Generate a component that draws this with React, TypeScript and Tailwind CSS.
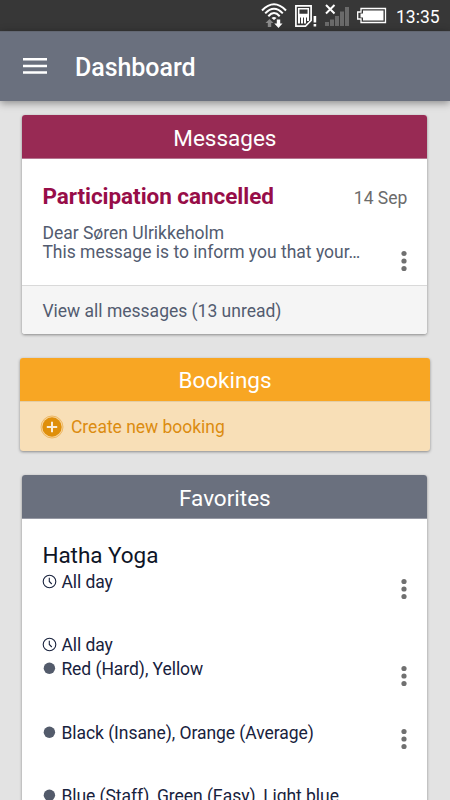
import React from 'react';

const WifiIcon = () => (
  <svg className="w-7 h-[31px]" viewBox="260 0 28 31" fill="none">
    <path d="M262 10.5Q274 -2 286 10.5" stroke="white" strokeWidth="2" />
    <path d="M265.2 13.4Q274 4 282.8 13.4" stroke="white" strokeWidth="2" />
    <path d="M268.3 16.2Q274 10 279.7 16.2" stroke="white" strokeWidth="2" />
    <path d="M271.5 18Q274 15.8 276.5 18L274 20Z" fill="white" />
    <path d="M269.5 19L273.5 23H271.2V27H267.8V23H265.5Z" fill="#8a8a8a" />
    <path d="M278.5 28L274.3 23.5H276.8V19.5H280.2V23.5H282.5Z" fill="white" />
  </svg>
);

const SimIcon = () => (
  <svg className="w-6 h-[31px]" viewBox="294 0 24 31" fill="none">
    <path d="M295.9 5.9H311.1V20.5L305.5 26.1H295.9Z" stroke="white" strokeWidth="1.7" />
    <path d="M298.7 8.7H308.3V14.5H298.7Z" stroke="white" strokeWidth="1.5" />
    <path d="M298 15H309V17.500H298ZM298 17H300V23.5H298ZM301 17H303V23.5H301ZM304 17H306V23.5H304ZM307 17H309V21H307Z" fill="white" />
    <path d="M313.6 16H316.2V22.5H313.6ZM313.6 24H316.2V26.6H313.6Z" fill="white" />
  </svg>
);

const SignalIcon = () => (
  <svg className="w-[26px] h-[31px]" viewBox="324 0 26 31">
    <path d="M325 22h4v4h-4zM330 19.5h4v6.5h-4zM335 16h4v10h-4zM340 11.5h4v14.5h-4zM345 7h4v19h-4z" fill="#6a6a6a" />
    <path d="M326 5L334.5 13.5M334.5 5L326 13.5" stroke="white" strokeWidth="2" />
  </svg>
);

const BatteryIcon = () => (
  <svg className="w-[30px] h-[31px]" viewBox="357 0 30 31">
    <path d="M361 8.5H385.5V22.5H361V19H357.7V12H361Z" fill="none" stroke="white" strokeWidth="1.3" />
    <path d="M363 10.5H383.5V20.5H363V17.5H360.5V13.5H363Z" fill="white" />
  </svg>
);

const ClockIcon = () => (
  <svg className="w-[15px] h-[15px]" viewBox="0 0 15 15" fill="none" stroke="#18223d">
    <circle cx="7.5" cy="7.5" r="6.3" strokeWidth="1.1" />
    <path d="M7.3 3.7V7.5L9.8 10" strokeWidth="1.1" />
  </svg>
);

const DotIcon = () => (
  <svg className="w-[15px] h-[15px]" viewBox="0 0 15 15" fill="#535b6b">
    <circle cx="7.4" cy="7.3" r="5.7" />
  </svg>
);

const PlusIcon = () => (
  <svg className="w-6 h-6" viewBox="0 0 24 24" fill="none">
    <circle cx="12" cy="12" r="11" fill="#f8d59f" stroke="#edb864" strokeWidth="1" />
    <circle cx="12" cy="12" r="9.7" fill="#df8f0b" />
    <path d="M12 6.8V17.2M6.8 12H17.2" stroke="#faedda" strokeWidth="2" />
  </svg>
);

const MoreButton = () => (
  <button className="w-[6px] h-[22px] block" aria-label="More options">
    <svg className="w-[6px] h-[22px] block" viewBox="0 0 6 22" fill="#707070">
      <circle cx="3" cy="3.5" r="2.6" />
      <circle cx="3" cy="11" r="2.6" />
      <circle cx="3" cy="18.5" r="2.6" />
    </svg>
  </button>
);

const StatusBar = () => (
  <div className="h-[31px] bg-[#373737] flex items-center pl-[260px] text-white">
    <WifiIcon />
    <div className="ml-1.5"><SimIcon /></div>
    <div className="ml-1.5"><SignalIcon /></div>
    <div className="ml-[7px]"><BatteryIcon /></div>
    <span className="ml-[9px] pt-[3px] text-[17.5px] leading-[28px]">13:35</span>
  </div>
);

const Header = () => (
  <header className="relative h-[70px] bg-[#6a707e] border-t border-[#626772] shadow-[0_2px_8px_rgba(0,0,0,0.4)] flex items-center text-white">
    <svg className="w-6 h-[18px] ml-[23px] mb-0.5" viewBox="0 0 24 18" fill="white">
      <path d="M0 1h24v2.5H0zM0 7.7h24v2.5H0zM0 14.3h24v2.5H0z" />
    </svg>
    <h1 className="ml-7 pt-0.5 text-[25px] leading-[30px] font-medium tracking-[-0.05px]">Dashboard</h1>
  </header>
);

interface CardTitleProps {
  className: string;
  children: React.ReactNode;
}

const CardTitle: React.FC<CardTitleProps> = ({ className, children }) => (
  <h2 className={`h-11 flex items-center justify-center text-[22.5px] leading-[28px] text-white border-b ${className}`}>
    {children}
  </h2>
);

interface FavoriteRowProps {
  icon: React.ReactNode;
  children: React.ReactNode;
}

const FavoriteRow: React.FC<FavoriteRowProps> = ({ icon, children }) => (
  <div className="flex items-center h-6 -mt-px mb-px text-[17.5px] tracking-[-0.05px] text-[#18223d] whitespace-nowrap">
    {icon}
    <span className="ml-1 pt-0.5">{children}</span>
  </div>
);

const cardShadow = 'rounded-[3px] overflow-hidden shadow-[0_1px_3px_rgba(0,0,0,0.4)]';

export default function App() {
  return (
    <div className="w-[450px] h-[800px] overflow-hidden bg-[#e3e3e3] font-['Roboto',sans-serif]">
      <StatusBar />
      <Header />

      <main className="pt-3.5 flex flex-col">
        <section className={`ml-[22.4px] mr-[22.7px] h-[219px] bg-white ${cardShadow}`}>
          <CardTitle className="bg-[#982a54] border-[#b57590] pt-[3px]">Messages</CardTitle>
          <div className="h-[126px] pl-5 pr-5 pt-[22px]">
            <div className="flex justify-between items-baseline">
              <h3 className="text-[22.5px] leading-[30px] font-bold tracking-[-0.05px] text-[#970d48]">Participation cancelled</h3>
              <span className="text-[17.5px] text-[#6b6b6b]">14 Sep</span>
            </div>
            <div className="mt-[12.5px] flex justify-between text-[17.5px] leading-[19.5px] text-[#535c70]">
              <p>
                Dear Søren Ulrikkeholm
                <br />
                This message is to inform you that your…
              </p>
              <div className="pt-[26px]"><MoreButton /></div>
            </div>
          </div>
          <a className="h-[49px] pl-5 pt-0.5 flex items-center bg-[#f5f5f5] border-t border-[#d9d9d9] text-[17.5px] text-[#535c70]">
            View all messages (13 unread)
          </a>
        </section>

        <section className={`mt-6 ml-5 mr-5 h-[93px] bg-[#f8dfb7] ${cardShadow}`}>
          <CardTitle className="bg-[#f8a623] border-[#e3cda6] pt-px">Bookings</CardTitle>
          <a className="h-[49px] pl-5 flex items-center text-[17.5px] text-[#dc8c10]">
            <PlusIcon />
            <span className="ml-[7px] pt-0.5 tracking-[-0.02px]">Create new booking</span>
          </a>
        </section>

        <section className={`mt-6 ml-[22.4px] mr-[22.7px] h-[360px] bg-white ${cardShadow}`}>
          <CardTitle className="bg-[#6a707e] border-[#9699a4] pt-[3px]">Favorites</CardTitle>
          <div className="pl-5 pr-5 pt-[22px]">
            <div className="flex justify-between h-[92px]">
              <div>
                <h3 className="text-[22.5px] leading-[29px] tracking-[-0.04px] text-[#0e1426]">Hatha Yoga</h3>
                <FavoriteRow icon={<ClockIcon />}>All day</FavoriteRow>
              </div>
              <div className="pt-[37px]"><MoreButton /></div>
            </div>
            <div className="flex justify-between h-[88px]">
              <div>
                <FavoriteRow icon={<ClockIcon />}>All day</FavoriteRow>
                <FavoriteRow icon={<DotIcon />}>Red (Hard), Yellow</FavoriteRow>
              </div>
              <div className="pt-8"><MoreButton /></div>
            </div>
            <div className="flex justify-between h-[63px]">
              <FavoriteRow icon={<DotIcon />}>Black (Insane), Orange (Average)</FavoriteRow>
              <div className="pt-[7px]"><MoreButton /></div>
            </div>
            <FavoriteRow icon={<DotIcon />}>Blue (Staff), Green (Easy), Light blue</FavoriteRow>
          </div>
        </section>
      </main>
    </div>
  );
}
